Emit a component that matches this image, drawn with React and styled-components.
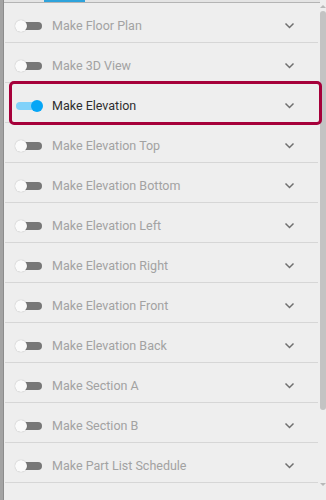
import React from 'react';
import styled, { createGlobalStyle } from 'styled-components';

const GlobalStyle = createGlobalStyle`
  html, body {
    margin: 0;
    padding: 0;
    background: #eeeeee;
    font-family: Roboto, "Liberation Sans", sans-serif;
  }
`

const Frame = styled.div`
  display: flex;
  width: 326px;
  height: 500px;
  overflow: hidden;
  background: #eeeeee;
`

const LeftEdge = styled.div`
  width: 3px;
  background: #a3a3a3;
  border-right: 1px solid #8c8c8c;
  flex-shrink: 0;
`

const Panel = styled.div`
  flex: 1;
  display: flex;
  flex-direction: column;
  min-width: 0;
`

const TopBar = styled.div`
  height: 2px;
  border-bottom: 1px solid #b4b4b4;
  background: #e4e4e4;
  display: flex;
`

const TabIndicator = styled.div`
  margin-left: 40px;
  width: 41px;
  height: 2px;
  background: #2ea3dc;
`

const List = styled.div`
  display: flex;
  flex-direction: column;
`

const Row = styled.div`
  position: relative;
  height: 33px;
  padding-top: 6px;
  display: flex;
  align-items: center;
  margin-right: 2px;
  margin-left: 1px;
  border-bottom: 1px solid #d6d6d6;
`

const Highlight = styled.div`
  position: absolute;
  left: 4px;
  right: -4px;
  top: -2px;
  bottom: -3px;
  border: 3px solid #a6003a;
  border-radius: 5px;
  pointer-events: none;
`

const Toggle = styled.div`
  position: relative;
  width: 26px;
  height: 8px;
  margin-left: 11px;
  border-radius: 4px;
  background: ${(props) => (props.on ? '#81d2fa' : '#777777')};
  flex-shrink: 0;
`

const Knob = styled.div`
  position: absolute;
  top: -2px;
  left: ${(props) => (props.on ? '15px' : '-1px')};
  width: 12px;
  height: 12px;
  border-radius: 50%;
  background: ${(props) => (props.on ? '#06a6f6' : '#fafafa')};
  box-shadow: ${(props) => (props.on ? 'none' : '0 0 1px rgba(0,0,0,0.35)')};
`

const Label = styled.span`
  flex: 1;
  margin-left: 10px;
  font-size: 12.5px;
  color: ${(props) => (props.on ? '#2e2e2e' : '#a2a2a2')};
  white-space: nowrap;
`

const Chevron = styled.svg`
  width: 11px;
  height: 7px;
  margin-right: 23px;
  flex-shrink: 0;
`

const Scrollbar = styled.div`
  width: 6px;
  flex-shrink: 0;
  display: flex;
  flex-direction: column;
  align-items: center;
  background: #eeeeee;
`

const Arrow = styled.div`
  width: 0;
  height: 0;
  margin: ${(props) => props.margin};
  border-left: 3px solid transparent;
  border-right: 3px solid transparent;
  ${(props) => (props.up ? 'border-bottom' : 'border-top')}: 3px solid #b8b8b8;
`

const Thumb = styled.div`
  width: 6px;
  height: 399px;
  margin-top: 3px;
  border-radius: 3px;
  background: #c3c3c3;
`

const Spacer = styled.div`
  flex: 1;
`

const items = [
  'Make Floor Plan',
  'Make 3D View',
  'Make Elevation',
  'Make Elevation Top',
  'Make Elevation Bottom',
  'Make Elevation Left',
  'Make Elevation Right',
  'Make Elevation Front',
  'Make Elevation Back',
  'Make Section A',
  'Make Section B',
  'Make Part List Schedule'
]

const ChevronIcon = () => (
  <Chevron viewBox="0 0 11 7">
    <path d="M1.5 1.5 L5.5 5.5 L9.5 1.5" fill="none" stroke="#6f6f6f" strokeWidth="1.5" />
  </Chevron>
)

const App = () => (
  <Frame>
    <GlobalStyle />
    <LeftEdge />
    <Panel>
      <TopBar>
        <TabIndicator />
      </TopBar>
      <List>
        {items.map((name) => {
          const on = name === 'Make Elevation'
          return (
            <Row key={name}>
              <Toggle on={on}>
                <Knob on={on} />
              </Toggle>
              <Label on={on}>{name}</Label>
              <ChevronIcon />
              {on && <Highlight />}
            </Row>
          )
        })}
      </List>
    </Panel>
    <Scrollbar>
      <Arrow up margin="5px 0 0" />
      <Thumb />
      <Spacer />
      <Arrow margin="0 0 14px" />
    </Scrollbar>
  </Frame>
)

export default App
